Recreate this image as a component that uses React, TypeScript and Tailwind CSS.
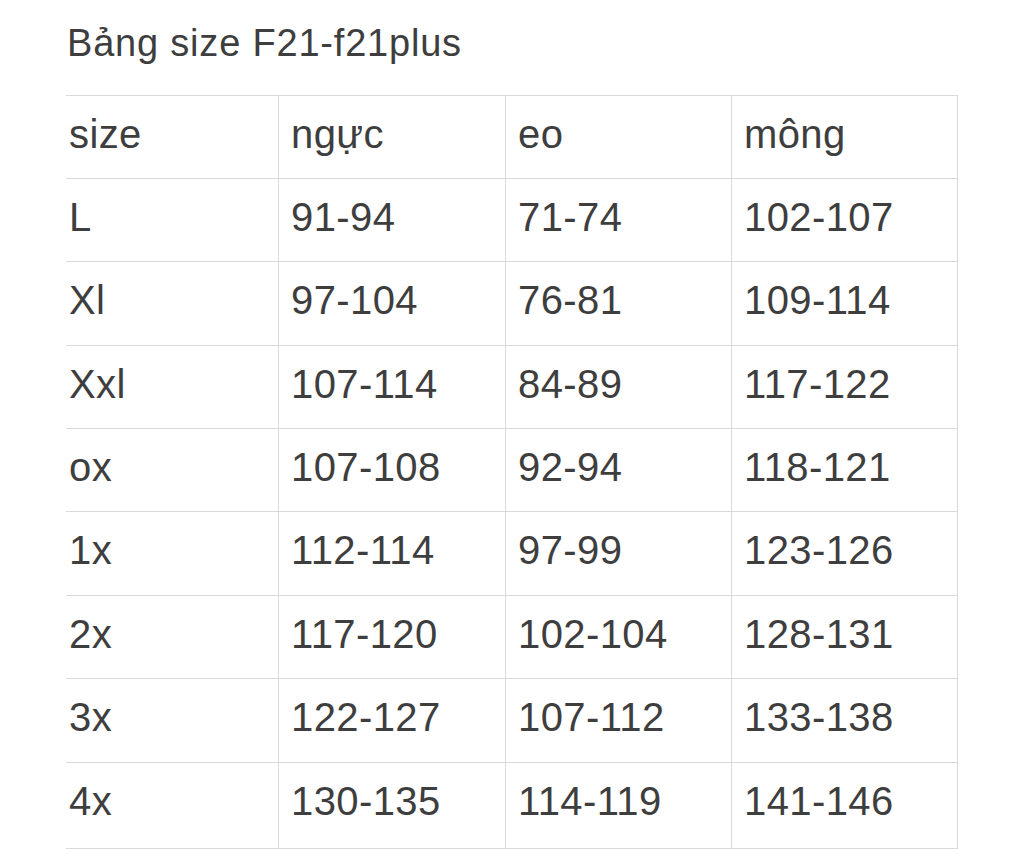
import React from "react";

const rows: string[][] = [
  ["size", "ngực", "eo", "mông"],
  ["L", "91-94", "71-74", "102-107"],
  ["Xl", "97-104", "76-81", "109-114"],
  ["Xxl", "107-114", "84-89", "117-122"],
  ["ox", "107-108", "92-94", "118-121"],
  ["1x", "112-114", "97-99", "123-126"],
  ["2x", "117-120", "102-104", "128-131"],
  ["3x", "122-127", "107-112", "133-138"],
  ["4x", "130-135", "114-119", "141-146"],
];

const heights = [83, 83, 84, 83, 83, 84, 83, 84, 86];

export default function App() {
  return (
    <div
      className="w-[1024px] h-[864px] bg-white text-[#3e3e3e] overflow-hidden"
      style={{ fontFamily: '"Liberation Sans", Arial, sans-serif' }}
    >
      <div className="pl-[67px] pt-[21px] text-[38px] leading-[44px] tracking-[0.8px]">
        Bảng size F21-f21plus
      </div>
      <div className="ml-[66px] mt-[30px] w-[892px] border-t border-r border-[#d9d9d9]">
        {rows.map((r, i) => (
          <div
            key={i}
            className="grid grid-cols-[212px_227px_226px_226px] border-b border-[#d9d9d9] box-border"
            style={{ height: heights[i] }}
          >
            {r.map((c, j) => (
              <div
                key={j}
                className={
                  j === 0
                    ? "pl-[3px] pt-[15px] text-[40px] leading-[46px] tracking-[0.4px]"
                    : "border-l border-[#d9d9d9] pl-[12px] pt-[15px] text-[40px] leading-[46px] tracking-[0.4px]"
                }
              >
                {c}
              </div>
            ))}
          </div>
        ))}
      </div>
    </div>
  );
}
